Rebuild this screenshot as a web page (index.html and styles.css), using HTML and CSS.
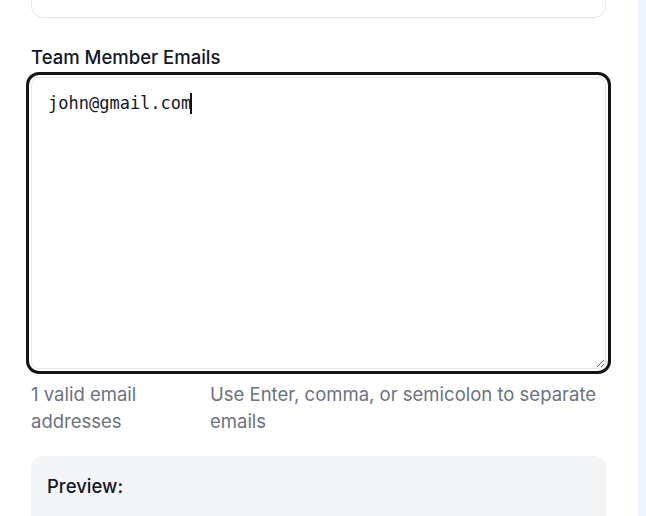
FILE: index.html
```html
<!DOCTYPE html>
<html lang="en">
<head>
<meta charset="utf-8">
<title>Team Member Emails</title>
<link rel="stylesheet" href="styles.css">
</head>
<body>
<div class="page">
  <main class="panel">
    <div class="top-card"></div>
    <label class="field-label" for="emails">Team Member Emails</label>
    <div class="textarea-wrap">
      <textarea id="emails" class="emails" spellcheck="false">john@gmail.com</textarea>
      <span class="caret"></span>
    </div>
    <div class="helper">
      <span class="helper-count">1 valid email addresses</span>
      <span class="helper-hint">Use Enter, comma, or semicolon to separate emails</span>
    </div>
    <section class="preview">
      <h3 class="preview-title">Preview:</h3>
    </section>
  </main>
  <aside class="side"></aside>
</div>
</body>
</html>
```
FILE: styles.css
```css
* { box-sizing: border-box; }
html, body { margin: 0; padding: 0; height: 100%; overflow: hidden; }
body {
  font-family: Inter, "Noto Sans", sans-serif;
  background: #ffffff;
}
.page {
  display: flex;
  height: 516px;
}
.panel {
  width: 638px;
  flex: none;
  background: #ffffff;
  padding: 0 32px 0 31px;
  display: flex;
  flex-direction: column;
}
.side {
  flex: 1;
  background: #eef4fd;
}
.top-card {
  margin-top: -40px;
  height: 58px;
  border: 1px solid #e5e7eb;
  border-radius: 12px;
  flex: none;
}
.field-label {
  margin-top: 25px;
  font-size: 18.5px;
  line-height: 28px;
  font-weight: 500;
  color: #111827;
}
.textarea-wrap {
  position: relative;
  margin-top: 6px;
  height: 292px;
}
.emails {
  display: block;
  width: 100%;
  height: 292px;
  border: 1px solid #e5e7eb;
  border-radius: 8px;
  padding: 13px 16px;
  font-family: "DejaVu Sans Mono", monospace;
  font-size: 17px;
  line-height: 24px;
  color: #111827;
  background: #ffffff;
  outline: none;
  resize: vertical;
  box-shadow: 0 0 0 2px #ffffff, 0 0 0 5px #141414;
}
.caret {
  position: absolute;
  left: 159px;
  top: 16px;
  width: 2px;
  height: 21px;
  background: #111111;
}
.helper {
  margin-top: 12px;
  display: grid;
  grid-template-columns: 163px 1fr;
  column-gap: 16px;
  font-size: 18.5px;
  line-height: 27px;
  color: #6b7280;
}
.preview {
  margin-top: 21px;
  background: #f3f4f6;
  border-radius: 12px;
  padding: 16px 16px 40px;
}
.preview-title {
  margin: 0;
  font-size: 18.5px;
  line-height: 28px;
  font-weight: 500;
  color: #111827;
}
```
